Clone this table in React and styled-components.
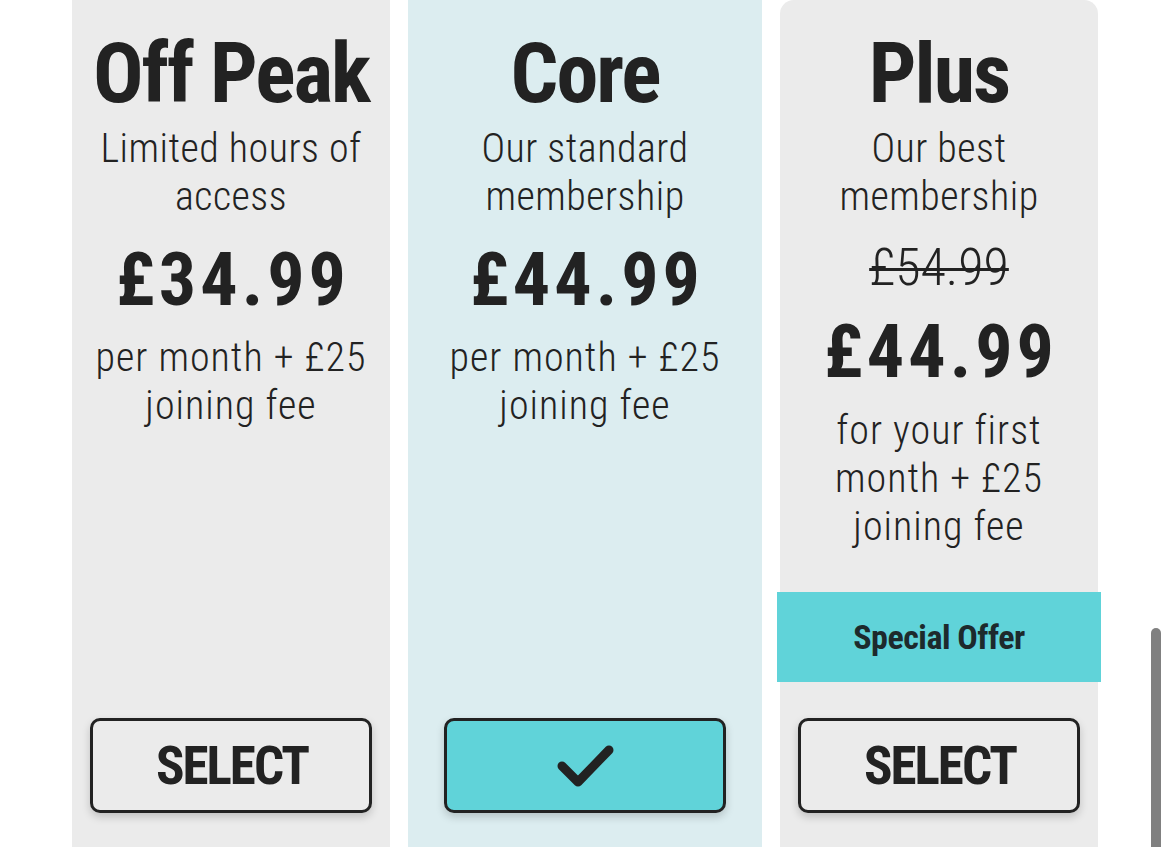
import styled, { createGlobalStyle } from "styled-components";

const GlobalStyle = createGlobalStyle`
  body {
    margin: 0;
    background: #fff;
    font-family: "Roboto Condensed", "Liberation Sans", sans-serif;
    color: #222;
  }
`;

const plans = [
  {
    name: "Off Peak",
    desc: "Limited hours of access",
    price: "£34.99",
    note: "per month + £25 joining fee",
    tone: "grey",
  },
  {
    name: "Core",
    desc: "Our standard membership",
    price: "£44.99",
    note: "per month + £25 joining fee",
    tone: "blue",
    selected: true,
  },
  {
    name: "Plus",
    desc: "Our best membership",
    oldPrice: "£54.99",
    price: "£44.99",
    note: "for your first month + £25 joining fee",
    tone: "grey",
    offer: "Special Offer",
    rounded: true,
  },
];

const CheckIcon = () => (
  <svg width="60" height="48" viewBox="0 0 60 48" fill="none">
    <path
      d="M6 24 L22 40 L53 8"
      stroke="#222"
      strokeWidth="9"
      strokeLinecap="round"
      strokeLinejoin="round"
    />
  </svg>
);

const App = () => {
  return (
    <>
      <GlobalStyle />
      <StPage>
        {plans.map((plan) => (
          <StCard key={plan.name} $tone={plan.tone} $rounded={plan.rounded}>
            <StTitle>{plan.name}</StTitle>
            <StDesc>{plan.desc}</StDesc>
            {plan.oldPrice && <StOldPrice>{plan.oldPrice}</StOldPrice>}
            <StPrice $gap={plan.oldPrice ? 21 : 22}>{plan.price}</StPrice>
            <StNote $gap={plan.oldPrice ? 18 : 17}>{plan.note}</StNote>
            {plan.offer && <StOffer>{plan.offer}</StOffer>}
            <StButton $selected={plan.selected} $afterOffer={!!plan.offer}>
              {plan.selected ? <CheckIcon /> : "SELECT"}
            </StButton>
          </StCard>
        ))}
      </StPage>
      <StScrollbar />
    </>
  );
};

export default App;

const StPage = styled.div`
  display: flex;
  flex-direction: row;
  align-items: stretch;
  gap: 18px;
  padding-left: 72px;
  height: 847px;
  overflow: hidden;
`;

const StCard = styled.div`
  display: flex;
  flex-direction: column;
  align-items: center;
  box-sizing: border-box;
  width: ${(p) => (p.$tone === "blue" ? "354px" : "318px")};
  padding: 32px 0 34px;
  background: ${(p) => (p.$tone === "blue" ? "#dcedf0" : "#ebebeb")};
  border-radius: ${(p) => (p.$rounded ? "14px 14px 0 0" : "0")};
  text-align: center;
`;

const StTitle = styled.h2`
  margin: 0;
  font-size: 84px;
  line-height: 84px;
  font-weight: 700;
  letter-spacing: -2px;
`;

const StDesc = styled.p`
  margin: 9px 0 0;
  width: 280px;
  font-size: 40px;
  line-height: 48px;
  font-weight: 300;
  letter-spacing: 0.5px;
`;

const StOldPrice = styled.div`
  margin-top: 21px;
  font-size: 52px;
  line-height: 52px;
  font-weight: 300;
  text-decoration: line-through;
  text-decoration-thickness: 3px;
`;

const StPrice = styled.div`
  margin-top: ${(p) => p.$gap}px;
  font-size: 74px;
  line-height: 74px;
  font-weight: 700;
  letter-spacing: 4px;
  padding-left: 4px;
`;

const StNote = styled.p`
  margin: ${(p) => p.$gap}px 0 0;
  width: 290px;
  font-size: 40px;
  line-height: 48px;
  font-weight: 300;
  letter-spacing: 1px;
`;

const StOffer = styled.div`
  display: flex;
  align-items: center;
  justify-content: center;
  align-self: stretch;
  margin: auto -3px 0;
  height: 90px;
  background: #60d3d9;
  color: #1d2a2c;
  font-size: 34px;
  font-weight: 700;
  letter-spacing: -0.5px;
`;

const StButton = styled.button`
  display: flex;
  align-items: center;
  justify-content: center;
  margin-top: ${(p) => (p.$afterOffer ? "36px" : "auto")};
  width: 282px;
  height: 95px;
  padding: 0 0 0 2px;
  border: 3px solid #222;
  border-radius: 10px;
  background: ${(p) => (p.$selected ? "#60d3d9" : "#ebebeb")};
  box-shadow: 0 4px 8px rgba(0, 0, 0, 0.18);
  color: #222;
  font-family: inherit;
  font-size: 53px;
  font-weight: 700;
  letter-spacing: -2px;
  cursor: pointer;
`;

const StScrollbar = styled.div`
  position: fixed;
  right: 9px;
  top: 628px;
  bottom: -10px;
  width: 10px;
  border-radius: 5px;
  background: #808080;
`;
